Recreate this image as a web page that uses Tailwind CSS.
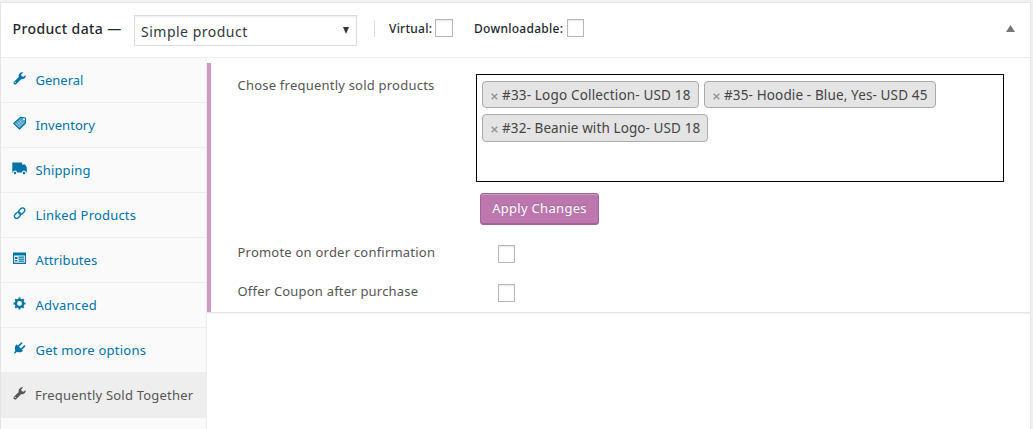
<!DOCTYPE html>
<html lang="en">
<head>
<meta charset="utf-8">
<title>Product data</title>
<script src="https://cdn.jsdelivr.net/npm/@tailwindcss/browser@4"></script>
</head>
<body class="h-[429px] overflow-hidden bg-[#f1f1f1] pt-[2px] font-['Noto_Sans','Open_Sans',sans-serif] text-[13px] text-[#32373c]">
<main class="flex h-[440px] w-[1031px] flex-col border border-[#e5e5e5] bg-white">
  <header class="flex h-[55px] shrink-0 border-b border-[#eee] pl-[11px]">
    <h2 class="mt-[15px] w-[122px] whitespace-nowrap pl-[0.5px] text-[14px] leading-[22px] font-medium tracking-[0.38px] text-[#23282d]"><span>Product data —</span></h2>
    <div class="mt-3 flex h-[31px] w-[223px] items-center justify-between border border-[#ddd] px-[6px] pt-[2px] text-[14px] shadow-[inset_0_1px_2px_rgba(0,0,0,0.07)]">
      <span class="tracking-[0.5px]">Simple product</span>
      <svg class="mb-[3px] mr-px h-[7px] w-[6px]" viewBox="0 0 6 7"><path d="M0 0h6L3 7z" fill="#32373c"/></svg>
    </div>
    <div class="mt-[17px] ml-[17px] h-[17px] w-px bg-[#ddd]"></div>
    <label class="mt-4 ml-[14px] flex w-[64px] justify-between whitespace-nowrap text-[12px] leading-[20px] font-medium tracking-[0.25px] text-[#23282d]"><span>Virtual:</span><i class="h-[18px] w-[18px] shrink-0 border border-[#b4b9be] shadow-[inset_0_1px_2px_rgba(0,0,0,0.1)]"></i></label>
    <label class="mt-4 ml-[21px] flex w-[110px] justify-between whitespace-nowrap text-[12px] leading-[20px] font-medium tracking-[0.28px] text-[#23282d]"><span>Downloadable:</span><i class="h-[18px] w-[17px] shrink-0 border border-[#b4b9be] shadow-[inset_0_1px_2px_rgba(0,0,0,0.1)]"></i></label>
    <svg class="mt-[22px] ml-auto mr-[15px] h-[7px] w-[9px]" viewBox="0 0 9 7"><path d="M4.5 0L9 7H0z" fill="#72777c"/></svg>
  </header>
  <div class="flex min-h-0 flex-1">
    <nav class="w-[206px] shrink-0 border-r border-[#eee] bg-[#fafafa] text-[#0073aa]">
      <a class="flex h-[45px] border-b border-[#eee] pl-[11px]"><svg class="mt-[13px] mr-[8.5px] h-[15px] w-[15px]" viewBox="0 0 20 20" fill="currentColor"><path d="M16.7 9.8c-1.2 1.1-2.9 1.6-4.6 1.2l-6.3 6.3c-.9.9-2.3.9-3.1 0-.9-.9-.9-2.3 0-3.1L9 7.9c-.4-1.7 0-3.4 1.2-4.6C11.5 2 13.2 1.5 14.8 2L12.2 4.6l.8 2.4 2.4.8L18 5.2c.5 1.600 0 3.400-1.300 4.600zM5 15.800a.8.8 0 10-1.200-1.100A.8.8 0 005 15.800z"/></svg><span class="leading-[44px]">General</span></a>
      <a class="flex h-[45px] border-b border-[#eee] pl-[11px]"><svg class="mt-[13px] mr-[8.5px] h-[15px] w-[15px]" viewBox="0 0 15 15"><path d="M1.700 7.300L8.500 1.300l5 .7v5L7.500 13z" fill="currentColor" fill-opacity=".7" stroke="currentColor" stroke-width="1.100" stroke-linejoin="round"/><path d="M3.500 7.200l4 4M5.300 5.600l3.900 3.900M7.200 4.100l3.700 3.700M5 9l5.500-5M6.800 10.700l5.200-4.900" stroke="#fafafa" stroke-opacity=".55" stroke-width=".7"/><circle cx="12" cy="3.200" r="1" fill="#fafafa"/></svg><span class="leading-[44px] tracking-[0.05px]">Inventory</span></a>
      <a class="flex h-[45px] border-b border-[#eee] pl-[11px]"><svg class="mt-[13px] mr-[8.5px] h-[15px] w-[15px]" viewBox="0 0 15 15" fill="currentColor"><path d="M0.300 1.500h9.700v2h3.200l1.600 3v5H14a2 2 0 00-4 0H5a2 2 0 00-4 0H.3z"/><circle cx="3" cy="12" r="1.200"/><circle cx="12" cy="12" r="1.200"/></svg><span class="leading-[44px] tracking-[0.15px]">Shipping</span></a>
      <a class="flex h-[45px] border-b border-[#eee] pl-[11px]"><svg class="mt-[13px] mr-[8.5px] h-[15px] w-[15px]" viewBox="0 0 15 15" fill="none" stroke="currentColor" stroke-width="1.300"><rect x="-3.500" y="-2.300" width="7" height="4.600" rx="2.300" transform="translate(9.700 5) rotate(-45)"/><rect x="-3.500" y="-2.300" width="7" height="4.600" rx="2.300" transform="translate(5.500 9.200) rotate(-45)"/></svg><span class="leading-[44px] tracking-[0.18px]">Linked Products</span></a>
      <a class="flex h-[45px] border-b border-[#eee] pl-[11px]"><svg class="mt-[13px] mr-[8.5px] h-[15px] w-[15px]" viewBox="0 0 15 15"><path d="M1 1.500h13v11.500H1z" fill="currentColor"/><path d="M2.200 4.500h10.600v7.200H2.200z" fill="#fafafa"/><path d="M3 6h2.500v2H3zM3 9h2.500v1.500H3zM6.500 5.500H12v1.200H6.500zM6.500 7.500H12v1.200H6.500zM6.500 9.500H12v1.200H6.500z" fill="currentColor"/></svg><span class="leading-[44px] tracking-[0.12px]">Attributes</span></a>
      <a class="flex h-[45px] border-b border-[#eee] pl-[11px]"><svg class="mt-[13px] mr-[8.5px] h-[15px] w-[15px]" viewBox="0 0 20 20" fill="none" stroke="currentColor"><circle cx="10" cy="10" r="4.800" stroke-width="3"/><path d="M10 2v3M10 15v3M2 10h3M15 10h3M4.300 4.300l2 2M13.700 13.700l2 2M4.300 15.700l2-2M13.700 6.300l2-2" stroke-width="2.600"/></svg><span class="leading-[44px] tracking-[0.22px]">Advanced</span></a>
      <a class="flex h-[44px] pl-[11px]"><svg class="mt-[13px] mr-[8.5px] h-[15px] w-[15px]" viewBox="0 0 15 15" fill="currentColor"><path d="M4.500 3.200l6.500 6.500c-1.500 1.600-4 2.100-6 1L3 12.500H1.800L3.300 9.700C2.300 7.500 3 5 4.500 3.200z"/><path d="M6.700 4.900L9.700 2M9.600 7.800l2.900-2.700" stroke="currentColor" stroke-width="1.600" stroke-linecap="round"/></svg><span class="leading-[44px] tracking-[0.25px]">Get more options</span></a>
      <a class="flex h-[46px] border-b border-[#eee] bg-[#eee] pl-[11px] text-[#555]"><svg class="mt-[14px] mr-[8px] h-[15px] w-[15px]" viewBox="0 0 20 20" fill="currentColor"><path d="M16.7 9.8c-1.200 1.100-2.900 1.600-4.600 1.200l-6.300 6.300c-.9.9-2.300.9-3.100 0-.9-.9-.9-2.300 0-3.100L9 7.900c-.4-1.700 0-3.400 1.200-4.600C11.500 2 13.200 1.500 14.800 2L12.200 4.600l.8 2.400 2.400.8L18 5.200c.5 1.600 0 3.400-1.300 4.600zM5 15.800a.8.8 0 10-1.200-1.100A.8.8 0 005 15.800z"/></svg><span class="whitespace-nowrap leading-[46px] tracking-[0.21px]">Frequently Sold Together</span></a>
    </nav>
    <section class="min-w-0 flex-1 pt-[5px]">
      <div class="h-[250px] border-b border-[#e5e5e5] shadow-[0_1px_1px_rgba(0,0,0,0.04)]">
        <div class="h-[249px] border-l-4 border-[#cc99c2] pt-[11px] pl-[26px] text-[#555]">
          <div class="flex">
            <span class="w-[239px] shrink-0 pl-[0.5px] leading-[22px] tracking-[0.22px]">Chose frequently sold products</span>
            <div class="flex h-[108px] w-[528px] flex-wrap content-start gap-x-[5px] gap-y-[6px] border border-black pt-[6px] pl-[5px] text-[13.500px] text-[#444]">
              <div class="flex h-[27px] w-[217px] items-center whitespace-nowrap rounded border border-[#aaa] bg-[#e4e4e4] pl-[8px]"><svg class="mt-[3px] mr-[4px] h-[7px] w-[7px]" viewBox="0 0 7 7"><path d="M.7.7l5.600 5.600M6.300.7L.7 6.300" stroke="#999" stroke-width="1.600"/></svg><span class="pt-px tracking-[0.17px]">#33- Logo Collection- USD 18</span></div>
              <div class="flex h-[27px] w-[232px] items-center whitespace-nowrap rounded border border-[#aaa] bg-[#e4e4e4] pl-[8px]"><svg class="mt-[3px] mr-[4px] h-[7px] w-[7px]" viewBox="0 0 7 7"><path d="M.7.7l5.600 5.600M6.300.7L.7 6.300" stroke="#999" stroke-width="1.600"/></svg><span class="pt-px tracking-[0.13px]">#35- Hoodie - Blue, Yes- USD 45</span></div>
              <div class="flex h-[28px] w-[226px] items-center whitespace-nowrap rounded border border-[#aaa] bg-[#e4e4e4] pl-[8px]"><svg class="mt-[3px] mr-[4px] h-[7px] w-[7px]" viewBox="0 0 7 7"><path d="M.7.7l5.600 5.600M6.300.7L.7 6.300" stroke="#999" stroke-width="1.600"/></svg><span class="pt-px tracking-[0.1px]">#32- Beanie with Logo- USD 18</span></div>
            </div>
          </div>
          <button class="mt-[11px] ml-[243px] block h-[32px] w-[119px] whitespace-nowrap rounded-[3px] border border-[#a46497] bg-[#bb77ae] pb-px text-white shadow-[inset_0_1px_0_rgba(255,255,255,0.25),inset_0_-1px_0_#a46497] [text-shadow:0_-1px_1px_#a46497]"><span class="tracking-[0.3px]">Apply Changes</span></button>
          <label class="mt-[16px] flex h-[22px]"><span class="w-[261px] pl-[0.5px] leading-[22px] tracking-[0.22px]">Promote on order confirmation</span><i class="mt-[4px] h-[18px] w-[17px] border border-[#b4b9be] shadow-[inset_0_1px_2px_rgba(0,0,0,0.1)]"></i></label>
          <label class="mt-[17px] flex h-[22px]"><span class="w-[261px] pl-[0.5px] leading-[22px] tracking-[0.2px]">Offer Coupon after purchase</span><i class="mt-[4px] h-[18px] w-[17px] border border-[#b4b9be] shadow-[inset_0_1px_2px_rgba(0,0,0,0.1)]"></i></label>
        </div>
      </div>
    </section>
  </div>
</main>
</body>
</html>
